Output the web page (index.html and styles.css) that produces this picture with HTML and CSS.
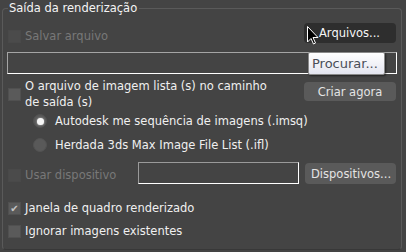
FILE: index.html
```html
<!DOCTYPE html>
<html lang="pt">
<head>
    <meta charset="UTF-8">
    <title>Saída da renderização</title>
    <link rel="stylesheet" href="styles.css">
</head>
<body>
    <div class="panel">
        <fieldset class="group">
            <legend>Saída da renderização</legend>

            <div class="row row-save">
                <label class="check disabled"><span class="box"></span>Salvar arquivo</label>
                <button class="btn btn-dark">Arquivos...</button>
            </div>

            <div class="path-field"></div>

            <div class="row row-list">
                <label class="check"><span class="box"></span><span>O arquivo de imagem lista (s) no caminho<br>de saída (s)</span></label>
                <button class="btn btn-create">Criar agora</button>
            </div>

            <div class="radio on"><span class="dot"></span>Autodesk me sequência de imagens (.imsq)</div>
            <div class="radio second"><span class="dot"></span>Herdada 3ds Max Image File List (.ifl)</div>

            <div class="row row-device">
                <label class="check disabled"><span class="box"></span>Usar dispositivo</label>
                <div class="device-field"></div>
                <button class="btn btn-devices">Dispositivos...</button>
            </div>

            <label class="check single frame"><span class="box">&#10004;</span>Janela de quadro renderizado</label>
            <label class="check single skip"><span class="box"></span>Ignorar imagens existentes</label>
        </fieldset>

        <div class="tooltip">Procurar...</div>
        <svg class="cursor" width="12" height="19" viewBox="0 0 12 19">
            <path d="M0.5 0.5 L0.5 16 L4 12.5 L6.5 18 L8.5 17 L6 11.5 L11 11.5 Z" fill="#000" stroke="#fff" stroke-width="1"/>
        </svg>
    </div>
</body>
</html>
```

FILE: styles.css
```css
* {
    box-sizing: border-box;
}

body {
    margin: 0;
    background-color: #444444;
    font-family: "DejaVu Sans", sans-serif;
    font-size: 11.5px;
    color: #f0f0f0;
}

.panel {
    position: relative;
    width: 406px;
    height: 252px;
    background-color: #444444;
    padding: 1px 4px 0 2px;
}

.group {
    margin: 0;
    height: 249px;
    border: 1px solid #5a5a5a;
    border-bottom-color: #383838;
    border-radius: 4px;
    padding: 0 5px 0 5px;
}

.group legend {
    padding: 0 2px 0 1px;
    line-height: 14px;
    color: #f4f4f4;
}

.row {
    display: flex;
    align-items: flex-start;
    justify-content: space-between;
}

/* checkboxes */
.check {
    display: flex;
    align-items: center;
    gap: 4px;
    line-height: 16px;
}

.check .box {
    width: 13px;
    height: 13px;
    flex: none;
    background-color: #5a5a5a;
    border: 1px solid #505050;
    color: #c4c4c4;
    font-size: 10px;
    line-height: 11px;
    text-align: center;
}

.check.disabled {
    color: #787878;
}

.check.disabled .box {
    background-color: #4b4b4b;
    border-color: #494949;
}

/* buttons */
.btn {
    font-family: "DejaVu Sans", sans-serif;
    font-size: 11.5px;
    color: #e4e4e4;
    background-color: #5a5a5a;
    border: none;
    border-radius: 4px;
    height: 19px;
    padding: 0 6px;
}

.row-save {
    margin-top: 8px;
    height: 20px;
}

.row-save .check {
    margin-top: 5px;
}

.btn-dark {
    background-color: #2e2e2e;
    color: #f6f6f6;
    width: 92px;
    height: 20px;
    padding-left: 15px;
    text-align: left;
}

.path-field {
    height: 22px;
    margin: 9px -1px 0 -1px;
    border: 1px solid #a5a5a5;
    border-bottom-color: #ffffff;
    border-right-color: #ffffff;
}

.row-list .check {
    margin-top: 4px;
}

.btn-create {
    width: 92px;
    margin-top: 8px;
}

/* radios */
.radio {
    display: flex;
    align-items: center;
    gap: 8px;
    height: 22px;
    padding-left: 25px;
}

.radio.second {
    height: 24px;
    padding-top: 2px;
}

.radio .dot {
    width: 14px;
    height: 14px;
    border-radius: 50%;
    background-color: #595959;
    border: 1px solid #525252;
    display: flex;
    align-items: center;
    justify-content: center;
}

.radio.on .dot::after {
    content: "";
    width: 7px;
    height: 7px;
    border-radius: 50%;
    background-color: #f6f6f6;
    box-shadow: 0 0 2px #d0d0d0;
}

/* device row */
.row-device {
    margin-top: 6px;
    height: 22px;
}

.row-device .check {
    margin-top: 5px;
}

.device-field {
    width: 161px;
    height: 22px;
    margin-left: auto;
    margin-right: 6px;
    border: 1px solid #9a9a9a;
    border-bottom-color: #ffffff;
    border-right-color: #ffffff;
}

.btn-devices {
    width: 91px;
    height: 21px;
    margin-top: 1px;
}

.frame {
    margin-top: 16px;
}

.skip {
    margin-top: 7px;
}

/* overlays */
.tooltip {
    position: absolute;
    left: 308px;
    top: 52px;
    width: 77px;
    height: 23px;
    background: linear-gradient(#ffffff, #e4e5f0);
    border: 1px solid #8a8a8a;
    border-radius: 2px;
    box-shadow: 1px 1px 2px rgba(0, 0, 0, 0.5);
    color: #4a4e58;
    font-family: "DejaVu Sans", sans-serif;
    font-size: 13px;
    line-height: 21px;
    padding-left: 3px;
}

.cursor {
    position: absolute;
    left: 307px;
    top: 26px;
}
```
